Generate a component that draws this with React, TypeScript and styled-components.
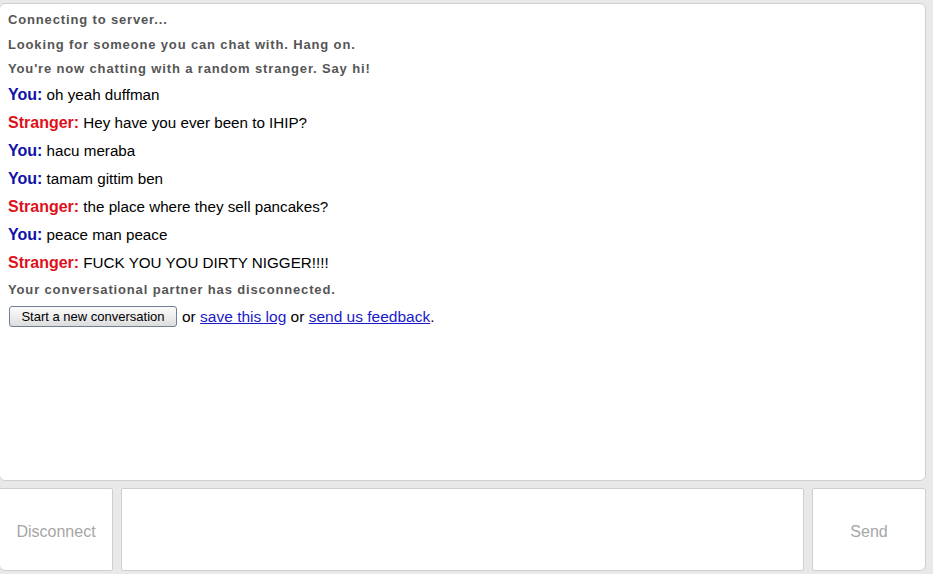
import React from "react";
import styled, { createGlobalStyle } from "styled-components";

const Global = createGlobalStyle`
  html, body { margin: 0; padding: 0; background: #e9e9e9; }
  body { font-family: "Liberation Sans", Arial, sans-serif; }
`;

const Page = styled.div`
  width: 933px;
  height: 574px;
  display: flex;
  flex-direction: column;
  overflow: hidden;
`;

const LogBox = styled.div`
  margin: 3px 0 0 -1px;
  width: 927px;
  height: 478px;
  box-sizing: border-box;
  background: #fff;
  border: 1px solid #cfcfcf;
  border-radius: 6px;
  padding: 6px 8px;
`;

const Status = styled.div`
  font-family: "Liberation Sans", Arial, sans-serif;
  font-weight: bold;
  font-size: 13px;
  letter-spacing: 0.85px;
  color: #555;
  height: 24.5px;
  line-height: 19px;
`;

const Msg = styled.div`
  font-size: 15.2px;
  color: #000;
  height: 28px;
  line-height: 21px;
`;

const Who = styled.strong<{ $you?: boolean }>`
  font-size: 16px;
  color: ${(p) => (p.$you ? "#1111aa" : "#e0101a")};
`;

const Actions = styled.div`
  display: flex;
  align-items: center;
  font-size: 15.5px;
  color: #000;
  margin-top: 2px;
  gap: 4px;
`;

const OldButton = styled.button`
  font-family: "Liberation Sans", Arial, sans-serif;
  font-size: 13px;
  height: 21px;
  width: 168px;
  padding: 0;
  margin: 0 1px 0 1px;
  border: 1px solid #6f7f95;
  border-radius: 3px;
  background: linear-gradient(#fbfbfb, #ececec 55%, #dcdcdc);
  color: #000;
`;

const Link = styled.a`
  color: #1a1acc;
  text-decoration: underline;
`;

const Bottom = styled.div`
  display: flex;
  gap: 8px;
  margin: 7px 0 0 -1px;
  width: 927px;
  height: 83px;
`;

const SideButton = styled.div<{ $left?: boolean }>`
  width: 114px;
  flex: none;
  box-sizing: border-box;
  padding-top: 4px;
  background: #fff;
  border: 1px solid #cfcfcf;
  border-radius: ${(p) => (p.$left ? "0 2px 2px 6px" : "2px 2px 6px 2px")};
  display: flex;
  align-items: center;
  justify-content: center;
  font-size: 16px;
  color: #a6a6a6;
`;

const TextArea = styled.div`
  flex: 1;
  background: #fff;
  border: 1px solid #cfcfcf;
  border-radius: 2px;
`;

export default function App() {
  return (
    <>
      <Global />
      <Page>
        <LogBox>
          <Status>Connecting to server...</Status>
          <Status>Looking for someone you can chat with. Hang on.</Status>
          <Status>You're now chatting with a random stranger. Say hi!</Status>
          <Msg><Who $you>You:</Who> oh yeah duffman</Msg>
          <Msg><Who>Stranger:</Who> Hey have you ever been to IHIP?</Msg>
          <Msg><Who $you>You:</Who> hacu meraba</Msg>
          <Msg><Who $you>You:</Who> tamam gittim ben</Msg>
          <Msg><Who>Stranger:</Who> the place where they sell pancakes?</Msg>
          <Msg><Who $you>You:</Who> peace man peace</Msg>
          <Msg><Who>Stranger:</Who> FUCK YOU YOU DIRTY NIGGER!!!!</Msg>
          <Status>Your conversational partner has disconnected.</Status>
          <Actions>
            <OldButton>Start a new conversation</OldButton>
            <span>or <Link href="#">save this log</Link> or <Link href="#">send us feedback</Link>.</span>
          </Actions>
        </LogBox>
        <Bottom>
          <SideButton $left>Disconnect</SideButton>
          <TextArea />
          <SideButton>Send</SideButton>
        </Bottom>
      </Page>
    </>
  );
}
